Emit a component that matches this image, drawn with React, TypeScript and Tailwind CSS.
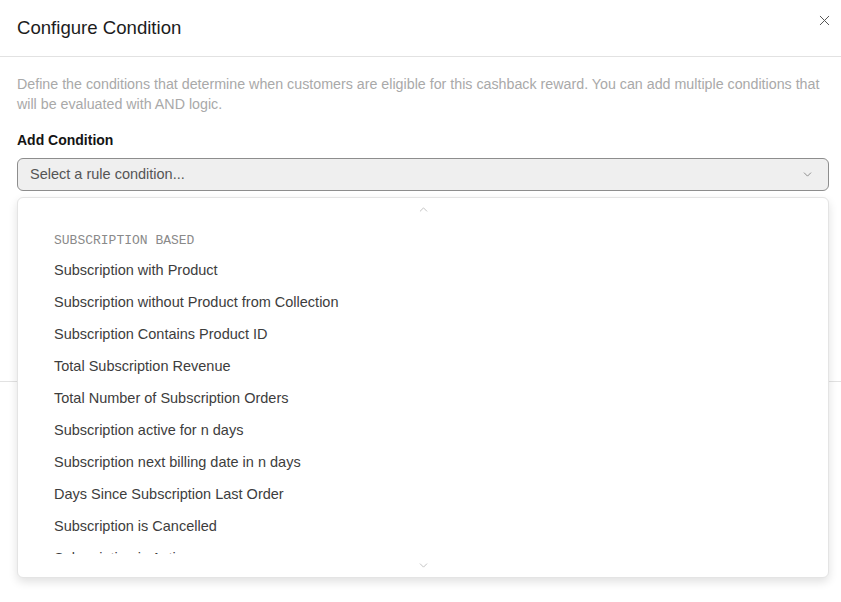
import { ChevronDown, ChevronUp, X } from 'lucide-react';

const subscriptionRules = [
  'Subscription with Product',
  'Subscription without Product from Collection',
  'Subscription Contains Product ID',
  'Total Subscription Revenue',
  'Total Number of Subscription Orders',
  'Subscription active for n days',
  'Subscription next billing date in n days',
  'Days Since Subscription Last Order',
  'Subscription is Cancelled',
  'Subscription is Active',
];

function RuleMenu() {
  return (
    <div className="absolute left-0 right-0 top-[39px] z-10 overflow-hidden rounded-md border border-[#e4e4e4] bg-white shadow-[0_4px_10px_rgba(0,0,0,0.12)]">
      <div className="flex h-[22px] items-center justify-center text-[#b5b5b5]">
        <ChevronUp size={13} strokeWidth={1.5} />
      </div>
      <div className="h-[334px] overflow-hidden pt-[7px]">
        <div className="flex h-[28px] items-center px-[36px] font-['Liberation_Mono',monospace] text-[13px] text-[#8a8a8a]">
          SUBSCRIPTION BASED
        </div>
        {subscriptionRules.map((rule) => (
          <div key={rule} className="flex h-[32px] items-center px-[36px] text-[14.5px] text-[#3d3d3d]">
            {rule}
          </div>
        ))}
      </div>
      <div className="flex h-[23px] items-center justify-center text-[#b5b5b5]">
        <ChevronDown size={13} strokeWidth={1.5} />
      </div>
    </div>
  );
}

export default function App() {
  return (
    <div className="min-h-screen bg-white font-['Liberation_Sans',Arial,sans-serif]">
      <header className="relative flex h-[57px] items-center border-b border-[#e2e2e2] px-[17px]">
        <h2 className="text-[18.6px] text-[#1c1c1c]">Configure Condition</h2>
        <button className="absolute right-[8px] top-[12px] text-[#555]">
          <X size={17} strokeWidth={1.4} />
        </button>
      </header>

      <section className="pl-[17px] pr-[12px] pt-[17px]">
        <p className="text-[14.25px] leading-[20px] text-[#a9a9a9]">
          Define the conditions that determine when customers are eligible for this cashback reward. You can add
          multiple conditions that will be evaluated with AND logic.
        </p>

        <label className="mt-[16px] block text-[14px] font-bold leading-[20px] text-[#141414]">Add Condition</label>

        <div className="relative mt-[8px]">
          <div className="flex h-[33px] items-center justify-between rounded-md border border-[#8d8d8d] bg-[#efefef] pl-[12px] pr-[14px] text-[14.5px] text-[#555]">
            <span>Select a rule condition...</span>
            <ChevronDown size={13} strokeWidth={1.5} className="text-[#777]" />
          </div>
          <RuleMenu />
        </div>
      </section>

      <div className="mt-[190px] border-t border-[#e2e2e2]" />
    </div>
  );
}
